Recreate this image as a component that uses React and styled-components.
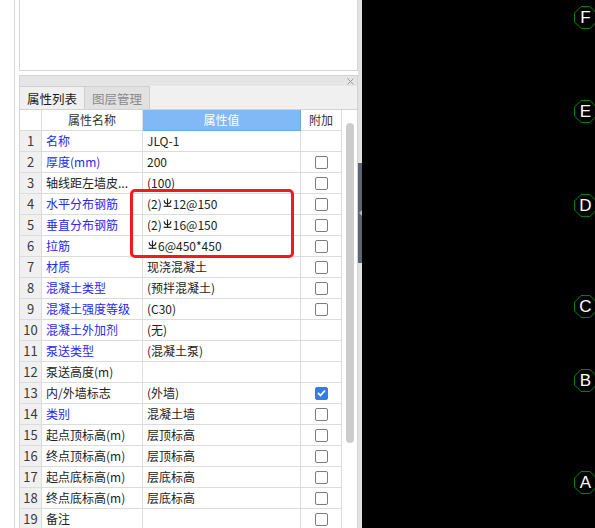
import React from "react";
import styled, { createGlobalStyle, css } from "styled-components";

const GlobalStyle = createGlobalStyle`
  html, body { margin: 0; padding: 0; background: #fff; }
  body { font-family: "Noto Sans CJK SC", "Noto Sans", sans-serif; }
  * { box-sizing: border-box; }
`;

const Page = styled.div`
  display: flex;
  width: 595px;
  height: 528px;
  overflow: hidden;
  background: #fff;
`;

const EdgeStrip = styled.div`
  width: 15px;
  flex: none;
  border-right: 1px solid #dadada;
  background: #fff;
`;

const Sidebar = styled.div`
  width: 339px;
  flex: none;
  margin-left: 4px;
  display: flex;
  flex-direction: column;
`;

const PreviewBox = styled.div`
  height: 71px;
  flex: none;
  border: 1px solid #d6d6d6;
  border-top: none;
  background: #fff;
`;

const Panel = styled.div`
  margin-top: 4px;
  flex: 1;
  display: flex;
  flex-direction: column;
  border-left: 1px solid #d4d4d4;
  border-right: 1px solid #d4d4d4;
  min-height: 0;
`;

const PanelTitle = styled.div`
  height: 11px;
  flex: none;
  border-top: 1px solid #d4d4d4;
  background: #e5e5e5;
  display: flex;
  justify-content: flex-end;
  align-items: center;
  padding-right: 3px;
`;

const TabBar = styled.div`
  height: 24px;
  flex: none;
  display: flex;
  background: #f0f0f0;
  border-bottom: 1px solid #d2d2d2;
`;

const Tab = styled.div`
  width: 65px;
  height: 23px;
  display: flex;
  align-items: center;
  justify-content: center;
  font-size: 12.5px;
  border-top: 1px solid #d0d0d0;
  border-right: 1px solid #cfcfcf;
  ${(p) =>
    p.$active
      ? css`
          background: #f0f0f0;
          color: #1a1a1a;
        `
      : css`
          background: #e1e1e1;
          color: #8a8a8a;
        `}
`;

const Body = styled.div`
  display: flex;
  flex: 1;
  min-height: 0;
`;

const Grid = styled.div`
  position: relative;
  width: 322px;
  flex: none;
`;

const Row = styled.div`
  display: grid;
  grid-template-columns: 22px 101px 158px 41px;
  height: 21px;
`;

const Cell = styled.div`
  height: 21px;
  border-right: 1px solid #dcdcdc;
  border-bottom: 1px solid #dcdcdc;
  font-size: 12px;
  line-height: 20px;
  white-space: nowrap;
  overflow: hidden;
  padding-left: 4px;
  color: ${(p) => p.$color || "#222"};
  display: flex;
  align-items: center;
`;

const NumCell = styled(Cell)`
  background: #f0f0f0;
  justify-content: center;
  padding-left: 0;
  font-size: 13px;
  color: #3a3a3a;
`;

const HeadCell = styled(Cell)`
  justify-content: center;
  padding-left: 0;
  color: #333;
  ${(p) =>
    p.$accent &&
    css`
      background: #80b9f6;
      color: #fff;
      border-right-color: #6aa8ec;
      border-bottom-color: #6aa8ec;
    `}
`;

const CheckCell = styled(Cell)`
  justify-content: center;
  padding-left: 0;
`;

const Box = styled.span`
  width: 13px;
  height: 13px;
  border-radius: 2px;
  display: inline-flex;
  align-items: center;
  justify-content: center;
  ${(p) =>
    p.$checked
      ? css`
          background: #2f7fe3;
          border: 1px solid #2f7fe3;
        `
      : css`
          background: #fff;
          border: 1px solid #7c7c7c;
        `}
`;

const Highlight = styled.div`
  position: absolute;
  left: 110px;
  top: 79px;
  width: 164px;
  height: 69px;
  border: 3px solid #ee1c1c;
  border-radius: 5px;
  pointer-events: none;
`;

const ScrollTrack = styled.div`
  flex: 1;
  background: #fff;
  padding-left: 4px;
  padding-top: 13px;
`;

const Thumb = styled.div`
  width: 8px;
  height: 320px;
  border-radius: 4px;
  background: #cdcdcd;
`;

const Splitter = styled.div`
  width: 4px;
  flex: none;
  background: #e2e2e2;
  display: flex;
  flex-direction: column;
`;

const Handle = styled.div`
  margin-top: 163px;
  height: 100px;
  background: #5b6470;
  display: flex;
  align-items: center;
  justify-content: center;
`;

const Arrow = styled.span`
  width: 0;
  height: 0;
  border-top: 3px solid transparent;
  border-bottom: 3px solid transparent;
  border-right: 3px solid #aeb4bd;
`;

const Canvas = styled.div`
  flex: 1;
  background: #000;
  position: relative;
`;

const Bubble = styled.div`
  position: absolute;
  width: 25px;
  height: 25px;
  display: flex;
  align-items: center;
  justify-content: center;
`;

const BubbleShape = styled.svg`
  position: absolute;
  inset: 0;
`;

const BubbleLabel = styled.span`
  position: relative;
  color: #fff;
  font-family: "Liberation Sans", Arial, sans-serif;
  font-size: 17px;
  line-height: 1;
`;

const Rebar = styled.svg`
  width: 9px;
  height: 9px;
  margin: 0 1px;
  align-self: flex-start;
  margin-top: 4px;
`;

const ValueText = styled.span`
  display: inline-flex;
  align-items: center;
`;

const CloseIcon = () => (
  <svg width="7" height="7" viewBox="0 0 7 7">
    <path d="M0.5 0.5 L6.5 6.5 M6.5 0.5 L0.5 6.5" stroke="#9a9a9a" strokeWidth="1" fill="none" />
  </svg>
);

const RebarSymbol = () => (
  <Rebar viewBox="0 0 9 9">
    <path d="M4.5 0.5 V8.3" stroke="#222" strokeWidth="1.2" fill="none" />
    <path d="M1.2 2.2 Q1.2 5.6 4.5 5.6 Q7.8 5.6 7.8 2.2" stroke="#222" strokeWidth="1.2" fill="none" />
    <path d="M0.6 8.3 H8.4" stroke="#222" strokeWidth="1.2" fill="none" />
  </Rebar>
);

const Value = ({ v }) => {
  if (v && v.includes("Φ")) {
    const [before, after] = v.split("Φ");
    return (
      <ValueText>
        {before}
        <RebarSymbol />
        {after}
      </ValueText>
    );
  }
  return <ValueText>{v}</ValueText>;
};

const BLUE = "#2828ee";

const rows = [
  ["名称", true, "JLQ-1", null],
  ["厚度(mm)", true, "200", false],
  ["轴线距左墙皮...", false, "(100)", false],
  ["水平分布钢筋", true, "(2)Φ12@150", false],
  ["垂直分布钢筋", true, "(2)Φ16@150", false],
  ["拉筋", true, " Φ6@450*450", false],
  ["材质", true, "现浇混凝土", false],
  ["混凝土类型", true, "(预拌混凝土)", false],
  ["混凝土强度等级", true, "(C30)", false],
  ["混凝土外加剂", true, "(无)", null],
  ["泵送类型", true, "(混凝土泵)", null],
  ["泵送高度(m)", false, "", null],
  ["内/外墙标志", false, "(外墙)", true],
  ["类别", true, "混凝土墙", false],
  ["起点顶标高(m)", false, "层顶标高", false],
  ["终点顶标高(m)", false, "层顶标高", false],
  ["起点底标高(m)", false, "层底标高", false],
  ["终点底标高(m)", false, "层底标高", false],
  ["备注", false, "", false],
];

const bubbles = [
  ["F", 17.5],
  ["E", 111],
  ["D", 205],
  ["C", 306.5],
  ["B", 380],
  ["A", 482],
];

const octagon = Array.from({ length: 8 }, (_, i) => {
  const a = ((22.5 + i * 45) * Math.PI) / 180;
  return `${(12.5 + 11.8 * Math.cos(a)).toFixed(2)},${(12.5 + 11.8 * Math.sin(a)).toFixed(2)}`;
}).join(" ");

export default function App() {
  return (
    <>
      <GlobalStyle />
      <Page>
        <EdgeStrip />
        <Sidebar>
          <PreviewBox />
          <Panel>
            <PanelTitle>
              <CloseIcon />
            </PanelTitle>
            <TabBar>
              <Tab $active>属性列表</Tab>
              <Tab>图层管理</Tab>
            </TabBar>
            <Body>
              <Grid>
                <Row>
                  <HeadCell />
                  <HeadCell>属性名称</HeadCell>
                  <HeadCell $accent>属性值</HeadCell>
                  <HeadCell>附加</HeadCell>
                </Row>
                {rows.map(([name, blue, value, check], i) => (
                  <Row key={i}>
                    <NumCell>{i + 1}</NumCell>
                    <Cell $color={blue ? BLUE : "#222"}>{name}</Cell>
                    <Cell>
                      <Value v={value} />
                    </Cell>
                    <CheckCell>
                      {check !== null && (
                        <Box $checked={check}>
                          {check && (
                            <svg width="9" height="8" viewBox="0 0 9 8">
                              <path d="M1 4 L3.5 6.5 L8 1.5" stroke="#fff" strokeWidth="1.8" fill="none" />
                            </svg>
                          )}
                        </Box>
                      )}
                    </CheckCell>
                  </Row>
                ))}
                <Highlight />
              </Grid>
              <ScrollTrack>
                <Thumb />
              </ScrollTrack>
            </Body>
          </Panel>
        </Sidebar>
        <Splitter>
          <Handle>
            <Arrow />
          </Handle>
        </Splitter>
        <Canvas>
          {bubbles.map(([label, cy]) => (
            <Bubble key={label} style={{ left: 585.5 - 362 - 12.5, top: cy - 12.5 }}>
              <BubbleShape viewBox="0 0 25 25" width="25" height="25">
                <polygon points={octagon} fill="none" stroke="#0a8a0a" strokeWidth="1" />
              </BubbleShape>
              <BubbleLabel>{label}</BubbleLabel>
            </Bubble>
          ))}
        </Canvas>
      </Page>
    </>
  );
}
